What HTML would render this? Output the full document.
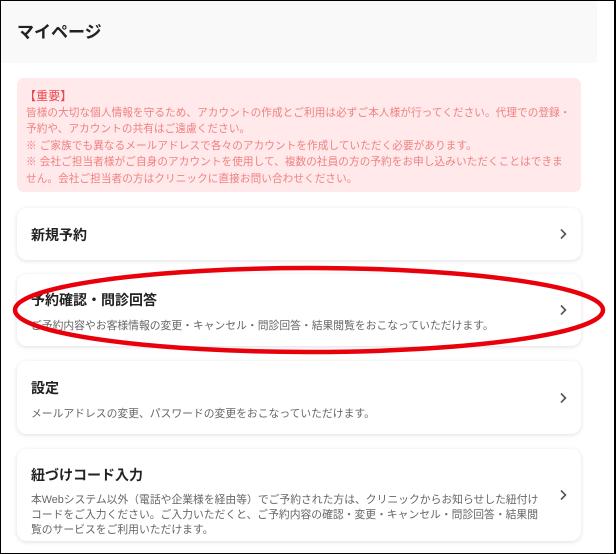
<!DOCTYPE html>
<html><head><meta charset="utf-8"><style>
*{margin:0;padding:0;box-sizing:border-box}
html,body{width:616px;height:554px;overflow:hidden;background:#fff}
body{font-family:"Liberation Sans","Noto Sans CJK JP",sans-serif;position:relative;border:1px solid #000;border-right:none}
.rb{position:absolute;right:0;top:0;width:2px;height:554px;background:#000}
.hdr{position:absolute;left:0;top:0;width:596px;height:62px;background:#f9f9f9}
.hdr h1{position:absolute;left:16px;top:17px;font-size:17px;font-weight:bold;color:#222}
.note{position:absolute;left:16px;top:77px;width:564px;height:114px;background:#ffe9ea;border-radius:7px;padding:10px 9px 0;color:#f08080;font-size:10.6px;letter-spacing:0.1px;line-height:16.4px;white-space:nowrap;overflow:hidden}
.note b{font-size:12px;font-weight:normal;color:#e8484f;display:block;line-height:17px;margin-left:-2px}
.card{position:absolute;left:16px;width:564px;background:#fff;border-radius:10px;box-shadow:0 1px 5px rgba(0,0,0,.13);padding:0 14px}
.card h2{font-size:14px;font-weight:bold;color:#222}
.card p{font-size:10.8px;color:#666;line-height:15px;width:512px;white-space:nowrap}
.chev{position:absolute;right:12px;top:50%;margin-top:-6px;width:12px;height:12px}
</style></head><body>
<div class="rb"></div>
<div class="hdr"><h1>マイページ</h1></div>
<div class="note"><b>【重要】</b>皆様の大切な個人情報を守るため、アカウントの作成とご利用は必ずご本人様が行ってください。代理での登録・<br>予約や、アカウントの共有はご遠慮ください。<br>※ ご家族でも異なるメールアドレスで各々のアカウントを作成していただく必要があります。<br>※ 会社ご担当者様がご自身のアカウントを使用して、複数の社員の方の予約をお申し込みいただくことはできま<br>せん。会社ご担当者の方はクリニックに直接お問い合わせください。</div>

<div class="card" style="top:207px;height:52px"><h2 style="padding-top:17px">新規予約</h2><svg class="chev" viewBox="0 0 12 12"><path d="M4 1.5L8.5 6L4 10.5" fill="none" stroke="#555" stroke-width="1.6"/></svg></div>
<div class="card" style="top:273px;height:72px"><h2 style="padding-top:16px">予約確認・問診回答</h2><p style="margin-top:9px">ご予約内容やお客様情報の変更・キャンセル・問診回答・結果閲覧をおこなっていただけます。</p><svg class="chev" viewBox="0 0 12 12"><path d="M4 1.5L8.5 6L4 10.5" fill="none" stroke="#555" stroke-width="1.6"/></svg></div>
<div class="card" style="top:360px;height:73px"><h2 style="padding-top:17px">設定</h2><p style="margin-top:9px">メールアドレスの変更、パスワードの変更をおこなっていただけます。</p><svg class="chev" viewBox="0 0 12 12"><path d="M4 1.5L8.5 6L4 10.5" fill="none" stroke="#555" stroke-width="1.6"/></svg></div>
<div class="card" style="top:448px;height:92px"><h2 style="padding-top:16px">紐づけコード入力</h2><p style="margin-top:8px">本Webシステム以外（電話や企業様を経由等）でご予約された方は、クリニックからお知らせした紐付け<br>コードをご入力ください。ご入力いただくと、ご予約内容の確認・変更・キャンセル・問診回答・結果閲<br>覧のサービスをご利用いただけます。</p><svg class="chev" viewBox="0 0 12 12"><path d="M4 1.5L8.5 6L4 10.5" fill="none" stroke="#555" stroke-width="1.6"/></svg></div>

<svg style="position:absolute;left:0;top:0" width="616" height="554"><ellipse cx="308" cy="309" rx="294" ry="42" fill="none" stroke="#e8000b" stroke-width="4.5"/></svg>
</body></html>
